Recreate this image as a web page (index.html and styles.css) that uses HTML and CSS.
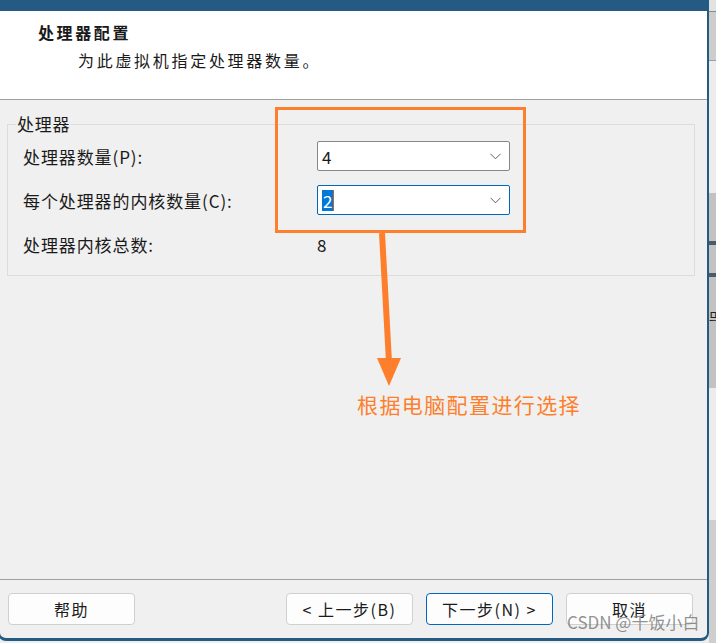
FILE: index.html
```html
<!DOCTYPE html>
<html>
<head>
  <meta charset="utf8" />
  <title>处理器配置</title>
  <link rel="stylesheet" href="styles.css">
</head>
<body>
  <div class="screen">
    <div class="dialog">
      <div class="header">
        <div class="title">处理器配置</div>
        <div class="subtitle">为此虚拟机指定处理器数量。</div>
      </div>
      <div class="content">
        <fieldset class="group">
          <legend>处理器</legend>
          <div class="row">
            <span class="label">处理器数量(P):</span>
            <div class="combo">
              <span class="value">4</span>
              <svg class="chev" width="11" height="7" viewBox="0 0 11 7"><polyline points="0.5,0.8 5.5,5.8 10.5,0.8" fill="none" stroke="#606060" stroke-width="1"/></svg>
            </div>
          </div>
          <div class="row">
            <span class="label">每个处理器的内核数量(C):</span>
            <div class="combo combo--focus">
              <span class="value"><span class="sel">2</span><span class="caret"></span></span>
              <svg class="chev" width="11" height="7" viewBox="0 0 11 7"><polyline points="0.5,0.8 5.5,5.8 10.5,0.8" fill="none" stroke="#606060" stroke-width="1"/></svg>
            </div>
          </div>
          <div class="row">
            <span class="label">处理器内核总数:</span>
            <span class="total">8</span>
          </div>
        </fieldset>
      </div>
      <div class="footer">
        <button class="btn">帮助</button>
        <div class="spacer"></div>
        <button class="btn">&lt; 上一步(B)</button>
        <button class="btn btn--default">下一步(N) &gt;</button>
        <button class="btn">取消</button>
      </div>
    </div>
    <div class="side">
      <div class="side__top"></div>
      <div class="side__grey"></div>
      <div class="side__light"></div>
      <div class="side__dark">
        <div class="side__bar"></div>
        <div class="side__bar side__bar--2"></div>
        <div class="side__txt">믜</div>
      </div>
      <div class="side__light"></div>
    </div>

    <!-- 标注 -->
    <div class="mark-box"></div>
    <svg class="mark-arrow" width="716" height="643" viewBox="0 0 716 643">
      <line x1="382" y1="233" x2="389" y2="362" stroke="#fd7f2b" stroke-width="6"/>
      <polygon points="377,358 401,358 389,386" fill="#fd7f2b"/>
    </svg>
    <div class="mark-text">根据电脑配置进行选择</div>
    <div class="watermark">CSDN @千饭小白</div>
  </div>
</body>
</html>
```

FILE: styles.css
```css
*{
  box-sizing: border-box;
}
body{
  margin: 0;
  background: #eeeeee;
  font-family: "Noto Sans CJK SC", "Noto Sans", sans-serif;
  color: #1a1a1a;
}
.screen{
  position: relative;
  width: 716px;
  height: 643px;
  display: flex;
  overflow: hidden;
}
.dialog{
  margin-left: -2px;
  width: 711px;
  height: 641px;
  flex-shrink: 0;
  border: 2px solid #245b82;
  border-top: 11px solid #245b82;
  border-bottom-width: 3px;
  border-radius: 0 0 8px 8px;
  background: #f0f0f0;
  display: flex;
  flex-direction: column;
  overflow: hidden;
}
.header{
  height: 89px;
  background: #ffffff;
  border-bottom: 1px solid #a0a0a0;
  padding: 10px 0 0 38px;
}
.title{
  font-size: 16px;
  font-weight: 700;
  letter-spacing: 2.6px;
  line-height: 22px;
}
.subtitle{
  margin-top: 6px;
  padding-left: 40px;
  font-size: 16px;
  letter-spacing: 2.7px;
  line-height: 22px;
}
.content{
  flex: 1;
  padding: 15px 0 0 7px;
}
.group{
  margin: 0;
  width: 688px;
  border: 1px solid #dcdcdc;
  padding: 8px 15px 16px 15px;
  display: flex;
  flex-direction: column;
  gap: 14px;
}
.group legend{
  padding: 0 1px;
  margin-left: -7px;
  font-size: 17px;
  letter-spacing: 0.7px;
  line-height: 18px;
}
.row{
  height: 30px;
  display: grid;
  grid-template-columns: 294px 193px;
  align-items: center;
}
.label{
  font-size: 17px;
  letter-spacing: 0.9px;
}
.combo{
  height: 30px;
  background: #ffffff;
  border: 1px solid #868686;
  border-radius: 2px;
  display: flex;
  align-items: center;
  justify-content: space-between;
  padding: 0 8px 0 4px;
}
.combo--focus{
  border-color: #0067c0;
}
.value{
  font-size: 17px;
  display: flex;
  align-items: center;
}
.sel{
  background: #0078d7;
  color: #ffffff;
  height: 21px;
  line-height: 21px;
  padding: 0 1px;
}
.caret{
  width: 1px;
  height: 21px;
  background: #c0661f;
}
.total{
  font-size: 17px;
}
.footer{
  height: 59px;
  border-top: 1px solid #a0a0a0;
  display: flex;
  align-items: flex-start;
  gap: 13px;
  padding: 13px 14px 0 8px;
}
.spacer{
  flex: 1;
}
.btn{
  width: 127px;
  height: 32px;
  background: #fdfdfd;
  border: 1px solid #d0d0d0;
  border-radius: 4px;
  font-family: "Noto Sans CJK SC", "Noto Sans", sans-serif;
  font-size: 16px;
  letter-spacing: 1.5px;
  color: #1a1a1a;
  padding: 0;
}
.btn--default{
  border-color: #0067c0;
}

/* 右侧的其他窗口 */
.side{
  flex: 1;
  display: flex;
  flex-direction: column;
  background: #cfcfcf;
}
.side__top{
  height: 12px;
  background: #e2e2e2;
  border-bottom: 1px solid #8a8a8a;
}
.side__grey{
  height: 49px;
  background: #cdcdcd;
  border-bottom: 1px solid #8ea2b4;
}
.side__light{
  flex: 1;
  background: #ececec;
  max-height: 132px;
}
.side__dark{
  height: 195px;
  background: #c2c2c2;
  padding-top: 48px;
}
.side__bar{
  height: 4px;
  background: #505a62;
}
.side__bar--2{
  margin-top: 28px;
}
.side__txt{
  margin-top: 30px;
  font-size: 13px;
  color: #222222;
  white-space: nowrap;
}

/* 标注层 */
.mark-box{
  position: absolute;
  left: 275px;
  top: 107px;
  width: 251px;
  height: 126px;
  border: 3px solid #fd7f2b;
}
.mark-arrow{
  position: absolute;
  left: 0;
  top: 0;
}
.mark-text{
  position: absolute;
  left: 357px;
  top: 389px;
  font-size: 21px;
  letter-spacing: 1.4px;
  color: #fd7f2b;
}
.watermark{
  position: absolute;
  left: 567px;
  top: 609px;
  font-size: 17px;
  white-space: nowrap;
  color: rgba(110,110,110,0.75);
}
```
